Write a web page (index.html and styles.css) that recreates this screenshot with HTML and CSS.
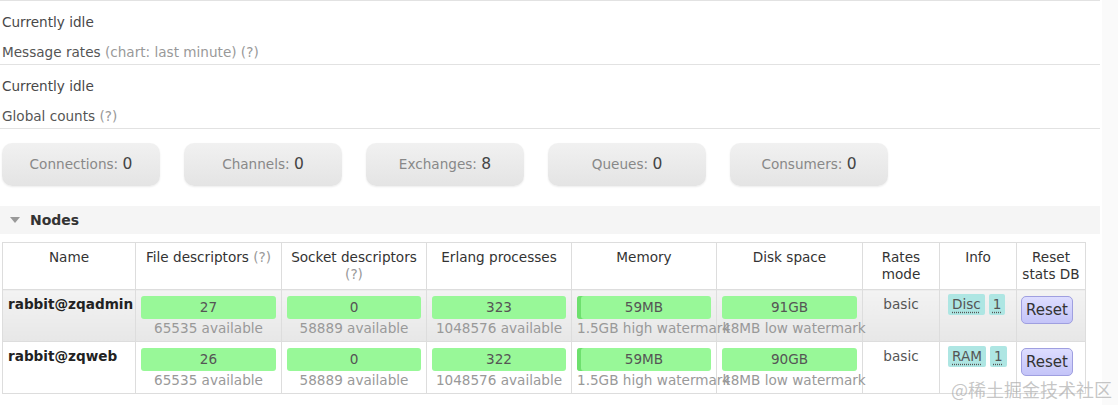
FILE: index.html
```html
<!DOCTYPE html>
<html lang="en">
<head>
  <meta charset="UTF-8">
  <title>RabbitMQ Management - Overview</title>
  <link rel="stylesheet" href="styles.css">
</head>
<body>
  <div class="page">
    <div class="main">
      <div class="rates first">
        <p class="idle">Currently idle</p>
        <h2 class="rates-title">Message rates <span class="hint">(chart: last minute) (?)</span></h2>
      </div>
      <div class="rates">
        <p class="idle">Currently idle</p>
        <h2 class="rates-title">Global counts <span class="hint">(?)</span></h2>
      </div>

      <div class="counts">
        <div class="count-box">Connections: <b>0</b></div>
        <div class="count-box">Channels: <b>0</b></div>
        <div class="count-box">Exchanges: <b>8</b></div>
        <div class="count-box">Queues: <b>0</b></div>
        <div class="count-box">Consumers: <b>0</b></div>
      </div>

      <div class="section-head">
        <span class="arrow"></span>
        <span>Nodes</span>
      </div>

      <table class="nodes">
        <thead>
          <tr>
            <th class="c-name">Name</th>
            <th class="c-wide2">File descriptors <span class="hint">(?)</span></th>
            <th class="c-wide">Socket descriptors <span class="hint">(?)</span></th>
            <th class="c-wide">Erlang processes</th>
            <th class="c-wide">Memory</th>
            <th class="c-wide2">Disk space</th>
            <th class="c-small">Rates mode</th>
            <th class="c-small">Info</th>
            <th class="c-reset">Reset stats DB</th>
          </tr>
        </thead>
        <tbody>
          <tr class="alt">
            <td class="name">rabbit@zqadmin</td>
            <td><div class="bar">27</div><div class="sub">65535 available</div></td>
            <td><div class="bar">0</div><div class="sub">58889 available</div></td>
            <td><div class="bar">323</div><div class="sub">1048576 available</div></td>
            <td><div class="bar mem">59MB</div><div class="sub">1.5GB high watermark</div></td>
            <td><div class="bar">91GB</div><div class="sub">48MB low watermark</div></td>
            <td class="mode">basic</td>
            <td class="info"><abbr>Disc</abbr><abbr>1</abbr></td>
            <td class="reset"><button class="reset-btn">Reset</button></td>
          </tr>
          <tr>
            <td class="name">rabbit@zqweb</td>
            <td><div class="bar">26</div><div class="sub">65535 available</div></td>
            <td><div class="bar">0</div><div class="sub">58889 available</div></td>
            <td><div class="bar">322</div><div class="sub">1048576 available</div></td>
            <td><div class="bar mem">59MB</div><div class="sub">1.5GB high watermark</div></td>
            <td><div class="bar">90GB</div><div class="sub">48MB low watermark</div></td>
            <td class="mode">basic</td>
            <td class="info"><abbr>RAM</abbr><abbr>1</abbr></td>
            <td class="reset"><button class="reset-btn">Reset</button></td>
          </tr>
        </tbody>
      </table>
    </div>
    <div class="side"></div>
  </div>
  <div class="watermark">@稀土掘金技术社区</div>
</body>
</html>
```

FILE: styles.css
```css
body {
  margin: 0;
  padding: 0;
  font-family: "DejaVu Sans", Verdana, sans-serif;
  font-size: 13.6px;
  color: #484848;
  background-color: #fff;
}

.page {
  display: flex;
  height: 405px;
  overflow: hidden;
}

.main {
  width: 1100px;
}

.side {
  flex: 1;
  background-color: #fafafa;
  margin-left: 2px;
}

.rates {
  border-bottom: 1px solid #e2e2e2;
  padding-bottom: 2px;
}

.rates.first {
  border-top: 1px solid #e2e2e2;
}

.idle {
  margin: 0;
  padding: 11px 0 0 2px;
  line-height: 20px;
}

.rates-title {
  margin: 10px 0 0;
  padding-left: 2px;
  font-size: 13.6px;
  font-weight: normal;
  line-height: 20px;
  color: #555;
}

.hint {
  color: #999;
}

.counts {
  display: flex;
  gap: 24px;
  margin: 14px 0 0 2px;
}

.count-box {
  width: 158px;
  height: 43px;
  line-height: 43px;
  text-align: center;
  color: #888;
  font-size: 13.6px;
  border-radius: 10px;
  background: linear-gradient(#f1f1f1, #e4e4e4);
  box-shadow: 0 1px 2px rgba(0, 0, 0, 0.08);
}

.count-box b {
  font-weight: normal;
  font-size: 15.5px;
  color: #444;
}

.section-head {
  display: flex;
  align-items: center;
  gap: 10px;
  height: 28px;
  margin-top: 20px;
  padding-left: 10px;
  background-color: #f5f5f5;
  font-weight: bold;
  font-size: 14px;
  color: #333;
}

.arrow {
  width: 0;
  height: 0;
  border-left: 5px solid transparent;
  border-right: 5px solid transparent;
  border-top: 6px solid #999;
}

.nodes {
  margin: 8px 0 0 2px;
  border-collapse: collapse;
  border: 1px solid #ddd;
  table-layout: fixed;
  width: 1084px;
}

.nodes th,
.nodes td {
  border: 1px solid #ddd;
  vertical-align: top;
  padding: 5px 5px 4px;
}

.nodes th {
  font-weight: normal;
  color: #333;
  line-height: 17px;
  height: 36px;
  text-align: center;
  padding-top: 6px;
}

.c-name { width: 122px; }
.c-wide { width: 134px; }
.c-wide2 { width: 135px; }
.c-small { width: 66px; }
.c-reset { width: 58px; }

.nodes tbody tr {
  height: 52px;
}

.nodes tr.alt td {
  background: linear-gradient(#f3f3f3, #e7e7e7);
}

.nodes td.name {
  font-weight: bold;
  color: #222;
  padding-left: 5px;
  padding-top: 6px;
}

.bar {
  background-color: #98f898;
  border-radius: 3px;
  height: 23px;
  line-height: 23px;
  margin-top: 1px;
  text-align: center;
  color: #555;
}

.bar.mem {
  box-shadow: inset 4px 0 0 #6ee06e;
}

.sub {
  color: #999;
  text-align: center;
  white-space: nowrap;
  line-height: 18px;
}

.nodes td.mode {
  text-align: center;
  color: #555;
  padding-top: 6px;
}

.nodes td.info {
  padding: 4px 4px 0 8px;
  white-space: nowrap;
}

.info abbr {
  display: inline-block;
  background-color: #aee6e3;
  color: #555;
  border-radius: 2px;
  padding: 2px 4px;
  margin-right: 4px;
  text-decoration: underline dotted;
  text-underline-offset: 3px;
  line-height: 17px;
}

.nodes td.reset {
  padding: 6px 4px 0 4px;
}

.reset-btn {
  font-family: "DejaVu Sans", Verdana, sans-serif;
  font-size: 15px;
  color: #333;
  background: linear-gradient(#ddddff, #c4c4f8);
  border: 1px solid #9f9fe0;
  border-radius: 5px;
  padding: 4px 4px;
  cursor: pointer;
}

.watermark {
  position: absolute;
  right: 6px;
  bottom: 6px;
  font-family: "Noto Sans CJK SC", sans-serif;
  font-size: 18px;
  line-height: 20px;
  color: rgba(160, 160, 160, 0.6);
}
```
